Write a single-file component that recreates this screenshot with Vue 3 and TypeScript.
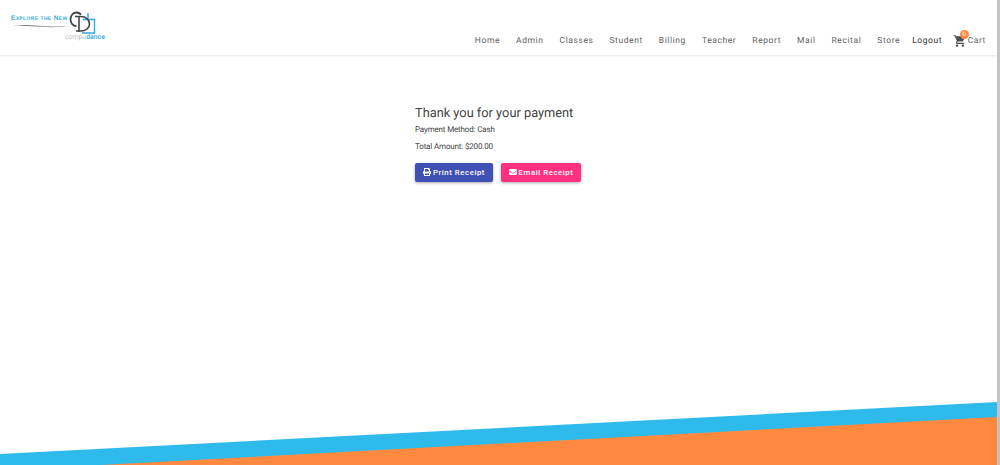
<script setup lang="ts">
const navItems: string[] = ['Home', 'Admin', 'Classes', 'Student', 'Billing', 'Teacher', 'Report', 'Mail', 'Recital', 'Store']
</script>

<template>
  <div class="page">
    <header class="topbar">
      <a class="logo" aria-label="Explore the new CompuDance">
        <span class="tagline">Explore the New</span>
        <svg class="swoosh" width="62" height="8" viewBox="0 0 62 8">
          <path d="M1 3 C18 0 30 5 58 3 C34 6 20 2 1 3Z" fill="#7d8287" />
        </svg>
        <svg class="mark" width="30" height="26" viewBox="0 0 30 26">
          <path d="M17 9.500H28.500V23H16" fill="none" stroke="#2fa9dc" stroke-width="1.400" />
          <path d="M22 3V10" fill="none" stroke="#2fa9dc" stroke-width="1.400" />
          <path d="M15 4.500C13.500 3 12.500 2.500 10.500 2.500C7 2.500 4.500 5.500 4.500 9.500C4.500 13 7 16 10.500 16" fill="none" stroke="#3f4448" stroke-width="1.800" />
          <path d="M9 6.500H15C20 6.500 23.500 10 23.500 14S20 21 15 21H10" fill="none" stroke="#3f4448" stroke-width="1.600" />
          <path d="M13 6.500V22" fill="none" stroke="#3f4448" stroke-width="1.600" />
        </svg>
        <span class="brand"><span class="brand-light">compu</span><span class="brand-strong">dance</span></span>
      </a>
      <nav class="nav">
        <a v-for="item in navItems" :key="item" class="nav-link">{{ item }}</a>
        <a class="logout">Logout</a>
        <a class="cart">
          <span class="cart-icon">
            <svg width="14" height="14" viewBox="0 0 24 24">
              <path fill="#4a4f54" d="M7 18c-1.100 0-1.990.900-1.990 2S5.900 22 7 22s2-.900 2-2-.900-2-2-2zM1 2v2h2l3.600 7.590-1.350 2.450c-.160.280-.250.610-.250.960 0 1.100.900 2 2 2h12v-2H7.420c-.140 0-.250-.110-.250-.250l.030-.120.900-1.630h7.450c.750 0 1.410-.410 1.750-1.030l3.580-6.490c.080-.140.120-.310.120-.480 0-.550-.450-1-1-1H5.210l-.940-2H1zm16 16c-1.100 0-1.990.900-1.990 2s.890 2 1.990 2 2-.900 2-2-.900-2-2-2z" />
            </svg>
            <span class="badge">0</span>
          </span>
          <span class="cart-label">Cart</span>
        </a>
      </nav>
    </header>

    <main class="content">
      <section class="receipt">
        <h1 class="title">Thank you for your payment</h1>
        <p class="line">Payment Method: Cash</p>
        <p class="line">Total Amount: $200.00</p>
        <div class="actions">
          <button class="btn btn-print" type="button">
            <svg width="8" height="8" viewBox="0 0 512 512">
              <path fill="#fff" d="M448 192V77.250c0-8.490-3.370-16.620-9.370-22.630L393.370 9.370c-6-6-14.140-9.370-22.630-9.370H96C78.330 0 64 14.330 64 32v160c-35.350 0-64 28.650-64 64v112c0 8.840 7.160 16 16 16h48v96c0 17.670 14.330 32 32 32h320c17.670 0 32-14.330 32-32v-96h48c8.840 0 16-7.160 16-16V256c0-35.350-28.650-64-64-64zm-64 256H128v-96h256v96zm0-224H128V64h192v48c0 8.840 7.160 16 16 16h48v96zm48 72c-13.250 0-24-10.750-24-24 0-13.260 10.750-24 24-24s24 10.740 24 24c0 13.250-10.750 24-24 24z" />
            </svg>
            Print Receipt
          </button>
          <button class="btn btn-email" type="button">
            <svg width="8" height="8" viewBox="0 0 512 512">
              <path fill="#fff" d="M502.300 190.800c3.900-3.100 9.700-.2 9.700 4.700V400c0 26.500-21.500 48-48 48H48c-26.500 0-48-21.500-48-48V195.600c0-5 5.700-7.800 9.700-4.700 22.400 17.400 52.100 39.500 154.100 113.600 21.100 15.400 56.700 47.800 92.200 47.600 35.700.3 72-32.800 92.300-47.600 102-74.100 131.600-96.300 154-113.700zM256 320c23.200.4 56.600-29.200 73.400-41.400 132.700-96.300 142.800-104.700 173.400-128.700 5.800-4.500 9.200-11.500 9.200-18.900v-19c0-26.500-21.500-48-48-48H48C21.500 64 0 85.500 0 112v19c0 7.400 3.400 14.300 9.200 18.900 30.600 23.900 40.700 32.400 173.400 128.700 16.800 12.200 50.200 41.800 73.400 41.400z" />
            </svg>
            Email Receipt
          </button>
        </div>
      </section>
    </main>

    <svg class="waves" width="997" height="63" viewBox="0 0 997 63" aria-hidden="true">
      <polygon points="0,52 997,0 997,63 0,63" fill="#2ebbec" />
      <polygon points="100,63 997,15 997,63" fill="#ff8a3f" />
    </svg>
    <div class="scrollbar"></div>
  </div>
</template>

<style scoped>
.page {
  position: relative;
  width: 1000px;
  height: 465px;
  overflow: hidden;
  background: #fff;
  font-family: Roboto, "Liberation Sans", sans-serif;
  color: #3c4043;
  text-rendering: geometricPrecision;
}
.topbar {
  display: flex;
  justify-content: space-between;
  align-items: flex-start;
  height: 55px;
  box-sizing: border-box;
  width: 997px;
  padding: 0 11px;
  background: #fff;
  box-shadow: 0 1px 2px rgba(0, 0, 0, 0.1);
}
.logo {
  position: relative;
  display: block;
  width: 94px;
  height: 44px;
}
.tagline {
  position: absolute;
  left: 0;
  top: 15px;
  font-family: "Liberation Sans", sans-serif;
  font-size: 6.500px;
  font-weight: 700;
  font-variant: small-caps;
  letter-spacing: 0.350px;
  line-height: 8px;
  color: #35aede;
  white-space: nowrap;
}
.swoosh {
  position: absolute;
  left: 1px;
  top: 23px;
}
.mark {
  position: absolute;
  left: 55px;
  top: 10px;
}
.brand {
  position: absolute;
  left: 54px;
  top: 33px;
  font-size: 6.900px;
  line-height: 9px;
  white-space: nowrap;
}
.brand-light {
  color: #9a9ea2;
  font-weight: 300;
}
.brand-strong {
  color: #2fa9dc;
  font-weight: 500;
}
.nav {
  display: flex;
  align-items: center;
  height: 20px;
  margin-top: 31px;
}
.nav-link {
  margin-right: 16px;
  font-size: 8.500px;
  letter-spacing: 0.580px;
  color: #5f5f5f;
  white-space: nowrap;
}
.nav-link:nth-child(10) {
  margin-right: 12px;
}
.logout {
  margin-right: 11.500px;
  font-size: 8.500px;
  letter-spacing: 0.580px;
  color: #333;
  white-space: nowrap;
}
.cart {
  display: flex;
  align-items: center;
  gap: 2px;
}
.cart-icon {
  position: relative;
  display: block;
  width: 12px;
  height: 12px;
}
.cart-icon svg {
  display: block;
  margin: -1px 0 0 -1px;
}
.badge {
  position: absolute;
  left: 6px;
  top: -5px;
  width: 9px;
  height: 9px;
  border-radius: 50%;
  background: #ff8a3f;
  color: #fff;
  font-size: 6px;
  line-height: 9px;
  text-align: center;
}
.cart-label {
  font-size: 8.500px;
  letter-spacing: 0.580px;
  color: #5f5f5f;
}
.content {
  display: flex;
  padding-top: 50px;
  padding-left: 415px;
}
.receipt {
  display: flex;
  flex-direction: column;
  align-items: flex-start;
}
.title {
  margin: 0 0 3px;
  font-size: 12.800px;
  font-weight: 400;
  line-height: 17px;
  color: #444;
}
.line {
  margin: 0 0 6px;
  font-size: 8px;
  letter-spacing: -0.150px;
  line-height: 10.500px;
  color: #444;
}
.actions {
  display: flex;
  gap: 8px;
  margin-top: 5px;
}
.btn {
  display: flex;
  align-items: center;
  justify-content: center;
  gap: 2px;
  height: 18.500px;
  padding: 0;
  border: 0;
  border-radius: 2px;
  color: #fff;
  font-family: Roboto, "Liberation Sans", sans-serif;
  font-size: 7.800px;
  font-weight: 500;
  letter-spacing: 0.550px;
  box-shadow: 0 1px 3px rgba(0, 0, 0, 0.35);
}
.btn-print {
  width: 78px;
  background: #3f51b5;
}
.btn-email {
  width: 80px;
  background: #ff3181;
}
.waves {
  position: absolute;
  left: 0;
  bottom: 0;
  display: block;
}
.scrollbar {
  position: absolute;
  right: 0;
  top: 0;
  width: 3px;
  height: 465px;
  background: #c4c4c4;
}
</style>

<style>
html, body {
  margin: 0;
  overflow: hidden;
}
</style>
